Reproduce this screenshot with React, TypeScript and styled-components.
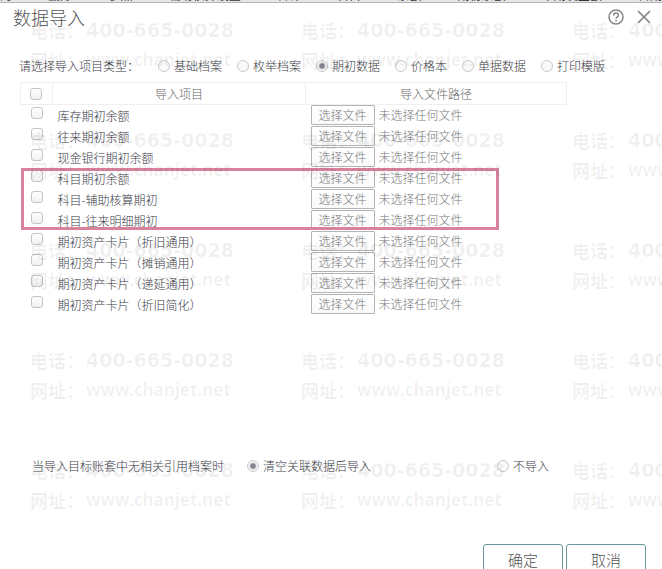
import React from "react";
import styled, { createGlobalStyle, css } from "styled-components";

const GlobalStyle = createGlobalStyle`
  *, *::before, *::after { box-sizing: border-box; }
  html { height: 100%; }
  body {
    margin: 0;
    height: 100%;
    overflow: hidden;
    background: #fff;
    color: #3c3c48;
    font: 300 12px/20px "Noto Sans CJK SC", sans-serif;
  }
`;

const Screen = styled.div`
  position: relative;
  overflow: hidden;
  height: 100vh;
`;

const Backdrop = styled.div`
  display: flex;
  align-items: flex-end;
  justify-content: space-between;
  height: 3px;
  overflow: hidden;
  white-space: nowrap;
  background: #e6e6e6;
  border-bottom: 1px solid #b4b4b4;
  color: #333;
  font-weight: 400;
  line-height: 14px;
`;

const Dialog = styled.section`
  display: flex;
  flex-direction: column;
`;

const TitleBar = styled.header`
  display: flex;
  align-items: center;
  height: 28px;
  padding: 0 11px 0 13px;
`;

const Title = styled.h1`
  flex: 1;
  margin: 0;
  color: #555;
  font-size: 18px;
  font-weight: 300;
  line-height: 28px;
`;

const IconButton = styled.button`
  display: flex;
  padding: 0;
  margin-left: 13px;
  border: 0;
  background: none;
  color: #85858a;
`;

const TypeRow = styled.fieldset`
  display: flex;
  align-items: center;
  margin: 25px 0 6px 19px;
  padding: 0;
  border: 0;
`;

const TypeLabel = styled.span`
  width: 139px;
`;

const Choice = styled.label<{ $width?: number }>`
  display: flex;
  align-items: center;
  gap: 4px;
  width: ${(p) => (p.$width ? `${p.$width}px` : "auto")};
  white-space: nowrap;
`;

const Radio = styled.input`
  appearance: none;
  width: 12px;
  height: 12px;
  margin: 0;
  border: 1px solid #c8c8cc;
  border-radius: 50%;
  background: #fafafa;
  &:checked {
    background: radial-gradient(circle, #85858f 0 2px, #fafafa 4px);
  }
`;

const Check = styled.input`
  appearance: none;
  display: block;
  width: 12px;
  height: 12px;
  margin: 0;
  border: 1px solid #c4c4c8;
  border-radius: 3px;
  background: linear-gradient(#fff, #f0f0f2);
`;

const Table = styled.table`
  width: 83%;
  max-width: calc(100% - 115px);
  margin-left: 20px;
  border-collapse: collapse;
  table-layout: fixed;
`;

const cellLine = css`
  border: 1px solid #efefef;
`;

const HeadCell = styled.th<{ $width?: string }>`
  ${cellLine}
  width: ${(p) => p.$width ?? "auto"};
  height: 22px;
  padding: 0;
  color: #666;
  font-weight: 300;
  line-height: 20px;
  &:first-child {
    padding-left: 9px;
  }
`;

const Cell = styled.td`
  height: 21px;
  padding: 0 0 0 5px;
  &:first-child {
    padding: 0 0 4px 10px;
  }
`;

const ItemLabel = styled.label`
  display: block;
  padding-top: 2px;
  line-height: 18px;
`;

const FilePicker = styled.div`
  display: flex;
  align-items: center;
  gap: 4px;
  color: #77777c;
`;

const FileButton = styled.button`
  width: 64px;
  height: 20px;
  padding: 0;
  border: 1px solid #b4b4b8;
  border-radius: 1px;
  background: linear-gradient(#fff, #fafafa);
  color: #77777c;
  font: inherit;
  line-height: 18px;
`;

const TableArea = styled.div`
  position: relative;
`;

const Highlight = styled.div`
  position: absolute;
  top: 86px;
  left: 21px;
  width: 478px;
  height: 62px;
  border: 3px solid #d9829c;
  pointer-events: none;
`;

const MissingRow = styled.fieldset`
  display: flex;
  align-items: center;
  margin: 141px 0 0 32px;
  padding: 0;
  border: 0;
`;

const MissingLabel = styled.span`
  width: 215px;
`;

const Footer = styled.footer`
  display: flex;
  justify-content: flex-end;
  gap: 3px;
  margin-top: 68px;
  padding-right: 16px;
`;

const ActionButton = styled.button`
  width: 80px;
  height: 32px;
  padding: 0;
  border: 1px solid #6a979a;
  border-radius: 3px;
  background: #fff;
  color: #555;
  font: inherit;
  font-size: 15px;
`;

const WatermarkLayer = styled.div`
  position: absolute;
  inset: 0;
  display: grid;
  grid-template-columns: repeat(3, 271px);
  grid-auto-rows: 110px;
  align-content: start;
  padding: 15px 0 0 30px;
  overflow: hidden;
  color: rgba(0, 0, 0, 0.06);
  font-family: "Noto Sans CJK SC", sans-serif;
  font-size: 18px;
  font-weight: 700;
  line-height: 30px;
  white-space: nowrap;
  pointer-events: none;
`;

const MarkLine = styled.div`
  display: flex;
  gap: 2px;
  height: 30px;
`;

const Phone = styled.span`
  font-family: "DejaVu Sans", sans-serif;
  font-size: 19px;
`;

const Site = styled.span`
  font-family: "Noto Sans", sans-serif;
  font-size: 17px;
`;

const backdropTexts = ["的", "删除", "参照", "辅助核算设置", "合计", "科目", "余额", "期初余额", "本期发生额", "日期"];

const types = [
  { name: "基础档案", width: 79 },
  { name: "枚举档案", width: 79 },
  { name: "期初数据", width: 79 },
  { name: "价格本", width: 67 },
  { name: "单据数据", width: 79 },
  { name: "打印模版", width: 79 },
];

const items = [
  "库存期初余额",
  "往来期初余额",
  "现金银行期初余额",
  "科目期初余额",
  "科目-辅助核算期初",
  "科目-往来明细期初",
  "期初资产卡片（折旧通用）",
  "期初资产卡片（摊销通用）",
  "期初资产卡片（递延通用）",
  "期初资产卡片（折旧简化）",
];

const HelpIcon = () => (
  <svg width="16" height="16" viewBox="0 0 16 16" fill="none" stroke="currentColor" strokeWidth="1.5">
    <circle cx="8" cy="8" r="7" />
    <path d="M5.7 6.4c0-3.2 4.7-3 4.7-.2 0 1.700-2.300 1.700-2.300 3.500M8.100 11v1.500" />
  </svg>
);

const CloseIcon = () => (
  <svg width="14" height="14" viewBox="0 0 14 14" fill="none" stroke="currentColor" strokeWidth="1.700">
    <path d="M1 1l12 12M13 1L1 13" />
  </svg>
);

export default function App() {
  return (
    <Screen>
      <GlobalStyle />
      <Backdrop aria-hidden="true">
        {backdropTexts.map((text) => (
          <span key={text}>{text}</span>
        ))}
      </Backdrop>
      <Dialog role="dialog" aria-labelledby="title">
        <TitleBar>
          <Title id="title">数据导入</Title>
          <IconButton aria-label="帮助"><HelpIcon /></IconButton>
          <IconButton aria-label="关闭"><CloseIcon /></IconButton>
        </TitleBar>
        <TypeRow aria-label="导入项目类型">
          <TypeLabel>请选择导入项目类型：</TypeLabel>
          {types.map((t) => (
            <Choice key={t.name} $width={t.width}>
              <Radio type="radio" name="type" defaultChecked={t.name === "期初数据"} />
              {t.name}
            </Choice>
          ))}
        </TypeRow>
        <TableArea>
          <Table>
            <thead>
              <tr>
                <HeadCell $width="32px"><Check type="checkbox" aria-label="全选" /></HeadCell>
                <HeadCell $width="253px">导入项目</HeadCell>
                <HeadCell>导入文件路径</HeadCell>
              </tr>
            </thead>
            <tbody>
              {items.map((item, i) => (
                <tr key={item}>
                  <Cell><Check type="checkbox" id={`item-${i}`} /></Cell>
                  <Cell><ItemLabel htmlFor={`item-${i}`}>{item}</ItemLabel></Cell>
                  <Cell>
                    <FilePicker>
                      <FileButton type="button">选择文件</FileButton>
                      <span>未选择任何文件</span>
                    </FilePicker>
                  </Cell>
                </tr>
              ))}
            </tbody>
          </Table>
          <Highlight />
        </TableArea>
        <MissingRow aria-label="当导入目标账套中无相关引用档案时">
          <MissingLabel>当导入目标账套中无相关引用档案时</MissingLabel>
          <Choice $width={250}>
            <Radio type="radio" name="missing" defaultChecked />
            清空关联数据后导入
          </Choice>
          <Choice>
            <Radio type="radio" name="missing" />
            不导入
          </Choice>
        </MissingRow>
        <Footer>
          <ActionButton type="button">确定</ActionButton>
          <ActionButton type="button">取消</ActionButton>
        </Footer>
      </Dialog>
      <WatermarkLayer aria-hidden="true">
        {Array.from({ length: 15 }, (_, i) => (
          <div key={i}>
            <MarkLine>电话：<Phone>400-665-0028</Phone></MarkLine>
            <MarkLine>网址：<Site>www.chanjet.net</Site></MarkLine>
          </div>
        ))}
      </WatermarkLayer>
    </Screen>
  );
}
